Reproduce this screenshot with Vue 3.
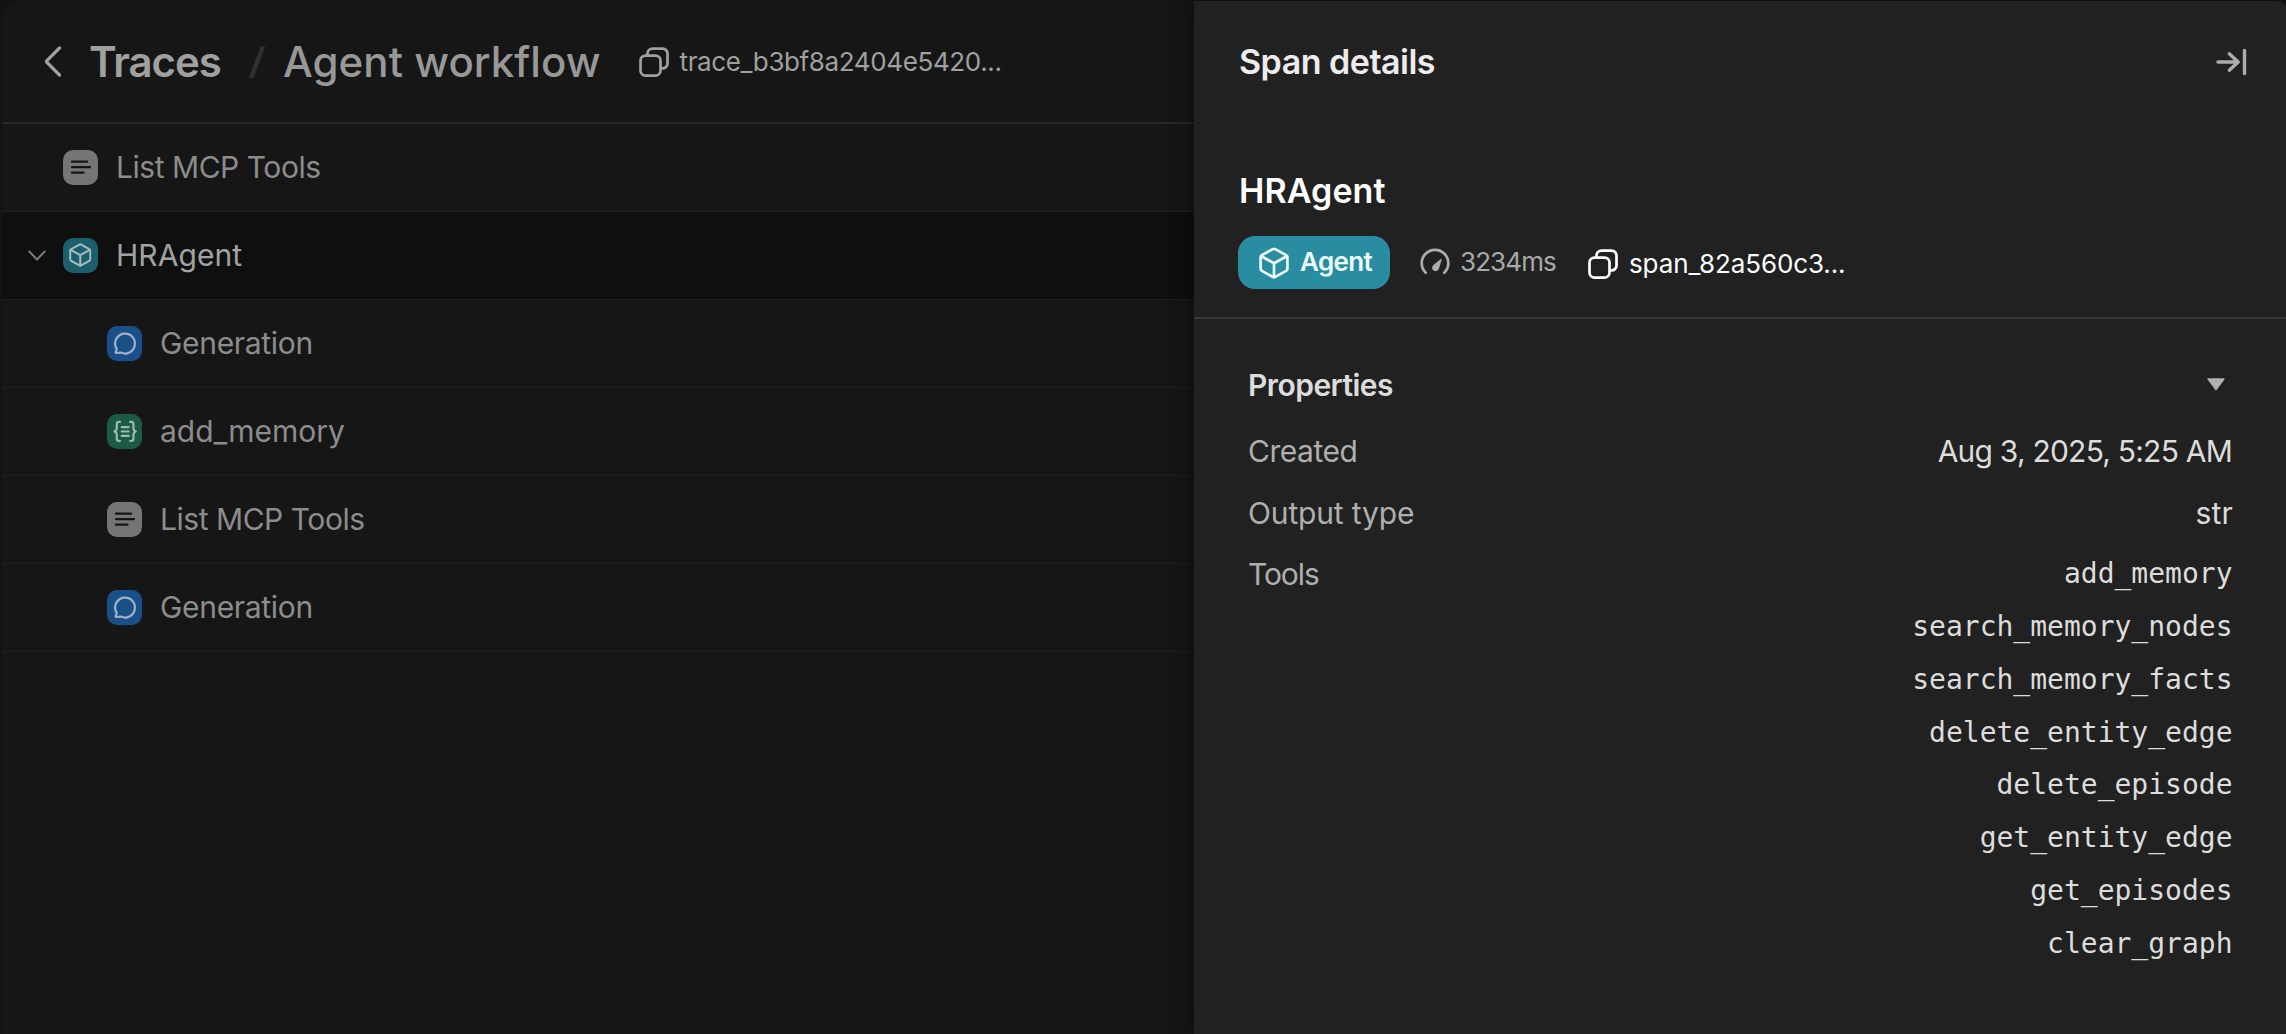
<script setup>
const spans = [
  { name: 'List MCP Tools', kind: 'list', depth: 0, cls: 'n-list' },
  { name: 'HRAgent', kind: 'agent', depth: 0, cls: 'n-agent', selected: true },
  { name: 'Generation', kind: 'chat', depth: 1, cls: 'n-gen' },
  { name: 'add_memory', kind: 'tool', depth: 1, cls: 'n-fn' },
  { name: 'List MCP Tools', kind: 'list', depth: 1, cls: 'n-list' },
  { name: 'Generation', kind: 'chat', depth: 1, cls: 'n-gen' },
]

const tools = [
  'add_memory',
  'search_memory_nodes',
  'search_memory_facts',
  'delete_entity_edge',
  'delete_episode',
  'get_entity_edge',
  'get_episodes',
  'clear_graph',
]
</script>

<template>
  <div class="app">
    <svg class="defs" width="0" height="0" aria-hidden="true">
      <symbol id="copy" viewBox="0 0 30 30">
        <g fill="none" stroke="currentColor" stroke-width="2.7" stroke-linecap="round" stroke-linejoin="round">
          <rect x="1.5" y="8.6" width="20" height="20" rx="5" />
          <path d="M8.5 8.2V6.6a5 5 0 0 1 5-5h10a5 5 0 0 1 5 5v9.8a5 5 0 0 1-5 5h-1.4" />
        </g>
      </symbol>
      <symbol id="cube" viewBox="0 0 30 32">
        <g fill="none" stroke="currentColor" stroke-width="2.7" stroke-linecap="round" stroke-linejoin="round">
          <path d="M13.8 2.1a2.4 2.4 0 0 1 2.4 0l10.9 6a2.4 2.4 0 0 1 1.3 2.1v11.6a2.4 2.4 0 0 1-1.3 2.1l-10.9 6a2.4 2.4 0 0 1-2.4 0l-10.9-6a2.4 2.4 0 0 1-1.3-2.1V10.2a2.4 2.4 0 0 1 1.3-2.1z" />
          <path d="M2.3 9.2 15 16.2l12.7-7M15 16.2V30" />
        </g>
      </symbol>
      <symbol id="gauge" viewBox="0 0 30 30">
        <path d="M5.7 24.7A13.3 13.3 0 1 1 24.3 24.7" fill="none" stroke="currentColor" stroke-width="2.7" stroke-linecap="round" />
        <path d="M21.7 11.7c.2-.7-.5-1.100-1-.6l-6.900 5.600a3.500 3.500 0 1 0 5 4.400z" fill="currentColor" />
      </symbol>
    </svg>

    <main class="traces">
      <header class="topbar">
        <svg class="back" width="18" height="31" viewBox="0 0 18 31">
          <path d="M15.5 2 3.2 14.3a1.7 1.7 0 0 0 0 2.4L15.5 29" fill="none" stroke="currentColor" stroke-width="3.3" stroke-linecap="round" />
        </svg>
        <span class="crumb root">Traces</span>
        <span class="slash">/</span>
        <span class="crumb current">Agent workflow</span>
        <svg class="copy" width="30" height="30"><use href="#copy" /></svg>
        <span class="trace-id">trace_b3bf8a2404e5420...</span>
      </header>

      <ul class="tree">
        <li v-for="(s, i) in spans" :key="i" class="row" :class="{ selected: s.selected, child: s.depth }">
          <span class="toggle">
            <svg v-if="s.selected" width="18" height="12" viewBox="0 0 18 12">
              <path d="M1.3 1.5 9 9.5l7.7-8" fill="none" stroke="currentColor" stroke-width="2" stroke-linecap="round" stroke-linejoin="round" />
            </svg>
          </span>
          <span class="tile" :class="s.kind">
            <svg v-if="s.kind === 'agent'" width="22.5" height="24"><use href="#cube" /></svg>
            <svg v-else width="35" height="35" viewBox="0 0 35 35" fill="none" stroke="currentColor" stroke-width="2.2" stroke-linecap="round" stroke-linejoin="round">
              <path v-if="s.kind === 'list'" d="M9 11.7h15M9 17.2h18M9 22.7h11.5" />
              <path v-else-if="s.kind === 'chat'" d="M18 7.7a9.9 9.9 0 1 1-4.1 18.9l-4.7.4c-.5 0-.8-.4-.6-.9l1.2-3A9.9 9.9 0 0 1 18 7.7z" />
              <g v-else>
                <path d="M13 7.9h-1c-1.5 0-2.2.8-2.2 2.2v3.6c0 2-.7 3.3-2.4 3.8 1.7.5 2.4 1.8 2.4 3.8v3.5c0 1.4.7 2.2 2.2 2.2h1" />
                <path d="M23.2 7.9h1c1.5 0 2.2.8 2.2 2.2v3.6c0 2 .7 3.3 2.4 3.8-1.7.5-2.4 1.8-2.4 3.8v3.5c0 1.4-.7 2.2-2.2 2.2h-1" />
                <path d="M14.7 13.1h7M14.7 17.5h7M14.7 21.9h7" />
              </g>
            </svg>
          </span>
          <span class="name" :class="s.cls">{{ s.name }}</span>
        </li>
      </ul>
    </main>

    <aside class="panel">
      <header class="panel-head">
        <h2>Span details</h2>
        <svg class="collapse" width="31" height="28" viewBox="0 0 31 28">
          <path d="M2 14h20M13.3 5.8l8.9 8.2-8.9 8.2M28.5 2.5v23" fill="none" stroke="currentColor" stroke-width="3.4" stroke-linecap="round" stroke-linejoin="round" />
        </svg>
      </header>

      <section class="summary">
        <h3>HRAgent</h3>
        <div class="meta">
          <span class="badge">
            <svg width="30" height="32"><use href="#cube" /></svg>
            <b>Agent</b>
          </span>
          <svg class="gauge" width="30" height="30"><use href="#gauge" /></svg>
          <span class="duration">3234ms</span>
          <svg class="copy" width="30" height="30"><use href="#copy" /></svg>
          <span class="span-id">span_82a560c3...</span>
        </div>
      </section>

      <section class="props">
        <div class="props-head">
          <h4>Properties</h4>
          <svg width="18" height="13" viewBox="0 0 18 13">
            <path d="M1.2 1h15.6L9 11.5z" fill="currentColor" stroke="currentColor" stroke-width="1.6" stroke-linejoin="round" />
          </svg>
        </div>
        <dl>
          <div class="prop">
            <dt class="k-created">Created</dt>
            <dd class="date">Aug 3, 2025, 5:25 AM</dd>
          </div>
          <div class="prop">
            <dt class="k-output">Output type</dt>
            <dd class="type">str</dd>
          </div>
          <div class="prop">
            <dt class="k-tools">Tools</dt>
            <dd class="tools"><code v-for="t in tools" :key="t">{{ t }}</code></dd>
          </div>
        </dl>
      </section>
    </aside>
  </div>
</template>

<style>
body {
  background: #131313;
}
</style>

<style scoped>
* {
  box-sizing: border-box;
  margin: 0;
  padding: 0;
}
.app {
  display: flex;
  height: 1034px;
  overflow: hidden;
  padding: 1px 0 0 2px;
  background: #131313;
  font-family: 'Inter', 'Liberation Sans', sans-serif;
  font-weight: 400;
  white-space: nowrap;
}
.defs {
  position: absolute;
}
svg {
  display: block;
  flex: none;
}

/* trace tree */
.traces {
  width: 1192px;
  flex: none;
  background: #161616;
  border-top-left-radius: 16px;
}
.topbar {
  display: flex;
  align-items: center;
  height: 123px;
  padding-left: 42px;
  border-bottom: 2px solid #282828;
  color: #a0a0a0;
}
.crumb {
  font-size: 42px;
  line-height: 50px;
}
.root {
  width: 133px;
  margin-left: 27px;
  padding-top: 1px;
  font-weight: 600;
  letter-spacing: -1.05px;
}
.slash {
  width: 18px;
  margin-left: 28px;
  padding-bottom: 2px;
  color: #303030;
  font-size: 36px;
  font-weight: 700;
  line-height: 48px;
  transform: skewX(-6deg);
}
.current {
  width: 318px;
  margin-left: 15px;
  color: #989898;
  font-weight: 550;
  letter-spacing: 0.06px;
}
.topbar .copy {
  margin-left: 37.5px;
}
.trace-id {
  margin-left: 11px;
  font-size: 26px;
  letter-spacing: -0.38px;
}
.tree {
  list-style: none;
}
.row {
  display: flex;
  align-items: center;
  height: 88px;
  padding-left: 24px;
  border-bottom: 1px solid #202020;
  color: #8c8c8c;
}
.row.child {
  padding-left: 68px;
}
.row.selected {
  background: #0f0f0f;
  color: #a2a2a2;
}
.toggle {
  width: 37px;
  padding: 0 0 0 2px;
  color: #7c7c7c;
}
.tile {
  display: flex;
  align-items: center;
  justify-content: center;
  width: 35px;
  height: 35px;
  margin-bottom: 1px;
  border-radius: 10px;
}
.tile.list {
  background: #757575;
  color: #161616;
}
.tile.agent {
  background: #1b5f6c;
  color: #a6bcc0;
}
.tile.chat {
  background: #1a508a;
  color: #a3b1c3;
}
.tile.tool {
  background: #1a5a46;
  color: #9dbaab;
}
.name {
  margin-left: 18px;
  padding-bottom: 2px;
  font-size: 30px;
  line-height: 40px;
}
.n-list {
  letter-spacing: -0.46px;
}
.n-agent {
  letter-spacing: 0.05px;
}
.n-gen {
  letter-spacing: -0.31px;
}

/* details panel */
.panel {
  flex: 1;
  position: relative;
  background: #212121;
  border-top-right-radius: 8px;
  box-shadow: -2px 0 22px rgba(0, 0, 0, 0.5);
}
.panel-head {
  display: flex;
  align-items: center;
  justify-content: space-between;
  height: 121px;
  padding: 0 39px 0 45px;
}
h2 {
  color: #ececec;
  font-size: 34px;
  font-weight: 600;
  line-height: 40px;
  letter-spacing: -0.5px;
}
.collapse {
  color: #adadad;
}
.summary {
  padding: 49px 44px 28px;
  border-bottom: 2px solid #363636;
}
h3 {
  margin-left: 1px;
  color: #fff;
  font-size: 34px;
  font-weight: 600;
  line-height: 40px;
  letter-spacing: 0.1px;
}
.meta {
  display: flex;
  align-items: center;
  margin-top: 25px;
  font-size: 26px;
  line-height: 32px;
}
.badge {
  display: flex;
  align-items: center;
  width: 152px;
  height: 53px;
  padding-left: 21px;
  border-radius: 17px;
  background: #298ca1;
  color: #ecfdff;
}
.badge b {
  margin-left: 11px;
  padding-bottom: 2px;
  font-weight: 600;
  letter-spacing: -0.64px;
}
.gauge {
  margin-left: 29.5px;
  color: #adadad;
}
.duration {
  width: 97px;
  margin-left: 10.5px;
  padding-bottom: 2px;
  color: #a9a9a9;
  letter-spacing: -0.91px;
}
.meta .copy {
  margin: 3px 0 0 30.5px;
  color: #fff;
}
.span-id {
  margin: 3px 0 0 11.5px;
  color: #fff;
  letter-spacing: -0.11px;
}
.props {
  padding: 46px 53px 0 54px;
  color: #dcdcdc;
  font-size: 30px;
}
.props-head {
  display: flex;
  align-items: center;
  justify-content: space-between;
  height: 40px;
  padding: 0 8.5px 1px 0;
  color: #b0b0b0;
}
h4 {
  color: #dcdcdc;
  font-size: 30px;
  font-weight: 600;
  letter-spacing: -0.55px;
}
dl {
  margin-top: 15px;
}
.prop {
  display: flex;
  justify-content: space-between;
  line-height: 62px;
}
dt {
  color: #afafaf;
}
.k-created {
  letter-spacing: -0.48px;
}
.k-output {
  letter-spacing: -0.15px;
}
.k-tools {
  margin-top: -1px;
  letter-spacing: -1.07px;
}
.date {
  margin-right: 1px;
  letter-spacing: -0.78px;
}
.type {
  letter-spacing: 0.18px;
}
.tools {
  display: flex;
  flex-direction: column;
  align-items: flex-end;
  margin-right: 0.5px;
  padding-top: 4px;
}
code {
  font-family: 'DejaVu Sans Mono', monospace;
  font-size: 28px;
  line-height: 52.86px;
}
</style>
